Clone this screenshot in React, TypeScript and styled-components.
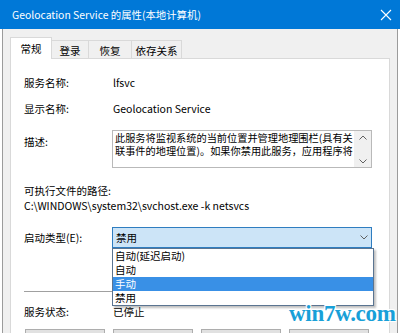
import styled, { createGlobalStyle } from "styled-components";

const GlobalStyle = createGlobalStyle`
  html, body {
    margin: 0;
    padding: 0;
    background: #ffffff;
  }
  body {
    font-family: "Noto Sans CJK SC", "Noto Sans", sans-serif;
    font-size: 10.5px;
    color: #000000;
  }
`;

const Window = styled.div`
  position: relative;
  width: 400px;
  height: 333px;
  overflow: hidden;
  display: flex;
  flex-direction: column;
  background: #ffffff;
`;

const TitleBar = styled.div`
  height: 29px;
  flex: none;
  background: #0078d7;
  color: #ffffff;
  display: flex;
  align-items: center;
  justify-content: space-between;
  padding: 0 8px 0 12px;
  font-size: 10.4px;
`;

const Frame = styled.div`
  flex: 1;
  display: flex;
  flex-direction: column;
  margin: 0 2px;
  padding: 8px 7px 0 7px;
  background: #f0f0f0;
  border-left: 1px solid #9b9b9b;
  border-right: 1px solid #9b9b9b;
`;

const TabStrip = styled.div`
  display: flex;
  align-items: flex-end;
  height: 21px;
`;

const Tab = styled.div<{ $active?: boolean; $w: number }>`
  position: relative;
  z-index: ${(p) => (p.$active ? 2 : 1)};
  box-sizing: border-box;
  width: ${(p) => p.$w}px;
  height: ${(p) => (p.$active ? 22 : 19)}px;
  margin-bottom: -1px;
  margin-left: -1px;
  background: ${(p) => (p.$active ? "#ffffff" : "#f0f0f0")};
  border: 1px solid #d9d9d9;
  border-bottom: ${(p) => (p.$active ? "none" : "1px solid #d9d9d9")};
  display: flex;
  align-items: center;
  justify-content: center;
  padding-top: ${(p) => (p.$active ? 0 : 1)}px;
  &:first-child {
    margin-left: 0;
  }
`;

const Panel = styled.div`
  flex: 1;
  position: relative;
  background: #ffffff;
  border: 1px solid #d9d9d9;
  padding: 17px 0 0 13px;
`;

const Row = styled.div<{ $mt: number; $top?: boolean }>`
  display: grid;
  grid-template-columns: 88px 260px;
  align-items: ${(p) => (p.$top ? "start" : "center")};
  margin-top: ${(p) => p.$mt}px;
  line-height: 14px;
`;

const Line = styled.div<{ $mt: number }>`
  margin-top: ${(p) => p.$mt}px;
  line-height: 14px;
  white-space: nowrap;
`;

const Label = styled.div<{ $pt?: number }>`
  padding-top: ${(p) => p.$pt ?? 0}px;
`;

const Value = styled.div`
  padding-left: 1px;
`;

const DescBox = styled.div`
  box-sizing: border-box;
  height: 38px;
  border: 1px solid #b9b9b9;
  display: flex;
`;

const DescText = styled.div`
  flex: 1;
  min-width: 0;
  padding-left: 2px;
  font-size: 10.2px;
  line-height: 13px;
  white-space: nowrap;
`;

const ScrollBar = styled.div`
  width: 17px;
  flex: none;
  background: #f0f0f0;
  display: flex;
  flex-direction: column;
  justify-content: space-between;
  align-items: center;
  padding: 4px 0 3px;
`;

const Combo = styled.div`
  position: relative;
  box-sizing: border-box;
  height: 21px;
  background: #cce4f7;
  border: 1px solid #2f7dc0;
  display: flex;
  align-items: center;
  justify-content: space-between;
  padding: 0 3px 0 3px;
`;

const DropList = styled.div`
  position: absolute;
  z-index: 5;
  top: 20px;
  left: -1px;
  width: 262px;
  box-sizing: border-box;
  background: #ffffff;
  border: 1px solid #5a7491;
  box-shadow: 2px 2px 2px rgba(0, 0, 0, 0.25);
`;

const DropItem = styled.div<{ $sel?: boolean }>`
  height: 14px;
  line-height: 14px;
  padding-left: 2px;
  background: ${(p) => (p.$sel ? "#3990e6" : "transparent")};
  color: ${(p) => (p.$sel ? "#ffffff" : "#000000")};
`;

const Separator = styled.div<{ $mt: number }>`
  margin-top: ${(p) => p.$mt}px;
  width: 348px;
  height: 1px;
  background: #a0a0a0;
`;

const ButtonRow = styled.div`
  display: flex;
  gap: 8px;
  margin-top: 10px;
  padding-left: 1px;
`;

const Button = styled.div`
  box-sizing: border-box;
  width: 80px;
  height: 22px;
  background: #e1e1e1;
  border: 1px solid #adadad;
`;

const Watermark = styled.div`
  position: absolute;
  z-index: 10;
  left: 289px;
  top: 301px;
  font-family: "Liberation Serif", "DejaVu Serif", serif;
  font-weight: bold;
  font-size: 23px;
  letter-spacing: -0.3px;
  color: #18a0d8;
  text-shadow: 1px 1px 0 #ffffff, -1px -1px 0 #ffffff, 1px -1px 0 #ffffff,
    -1px 1px 0 #ffffff;
`;

function Chevron({ up }: { up?: boolean }) {
  return (
    <svg width="8" height="5" viewBox="0 0 8 5">
      <path
        d={up ? "M0.5 4.5 L4 1 L7.5 4.5" : "M0.5 0.5 L4 4 L7.5 0.5"}
        fill="none"
        stroke="#606060"
        strokeWidth="1"
      />
    </svg>
  );
}

const tabs = [
  { name: "常规", w: 42 },
  { name: "登录", w: 38 },
  { name: "恢复", w: 44 },
  { name: "依存关系", w: 51 },
];

const startOptions = ["自动(延迟启动)", "自动", "手动", "禁用"];

export default function App() {
  return (
    <Window>
      <GlobalStyle />
      <TitleBar>
        <span>Geolocation Service 的属性(本地计算机)</span>
        <svg width="12" height="12" viewBox="0 0 12 12">
          <path d="M1 1 L11 11 M11 1 L1 11" stroke="#ffffff" strokeWidth="1.1" />
        </svg>
      </TitleBar>
      <Frame>
        <TabStrip>
          {tabs.map((t, i) => (
            <Tab key={t.name} $w={t.w} $active={i === 0}>
              {t.name}
            </Tab>
          ))}
        </TabStrip>
        <Panel>
          <Row $mt={0}>
            <Label>服务名称:</Label>
            <Value>lfsvc</Value>
          </Row>
          <Row $mt={12}>
            <Label>显示名称:</Label>
            <Value>Geolocation Service</Value>
          </Row>
          <Row $mt={14} $top>
            <Label $pt={5}>描述:</Label>
            <DescBox>
              <DescText>
                <div>此服务将监视系统的当前位置并管理地理围栏(具有关</div>
                <div>联事件的地理位置)。如果你禁用此服务，应用程序将</div>
              </DescText>
              <ScrollBar>
                <Chevron up />
                <Chevron />
              </ScrollBar>
            </DescBox>
          </Row>
          <Line $mt={16}>可执行文件的路径:</Line>
          <Line $mt={1}>C:\WINDOWS\system32\svchost.exe -k netsvcs</Line>
          <Row $mt={14}>
            <Label>启动类型(E):</Label>
            <Combo>
              <span>禁用</span>
              <Chevron />
              <DropList>
                {startOptions.map((o) => (
                  <DropItem key={o} $sel={o === "手动"}>
                    {o}
                  </DropItem>
                ))}
              </DropList>
            </Combo>
          </Row>
          <Separator $mt={43} />
          <Row $mt={13}>
            <Label>服务状态:</Label>
            <Value>已停止</Value>
          </Row>
          <ButtonRow>
            <Button />
            <Button />
            <Button />
            <Button />
          </ButtonRow>
        </Panel>
      </Frame>
      <Watermark>win7w.com</Watermark>
    </Window>
  );
}
